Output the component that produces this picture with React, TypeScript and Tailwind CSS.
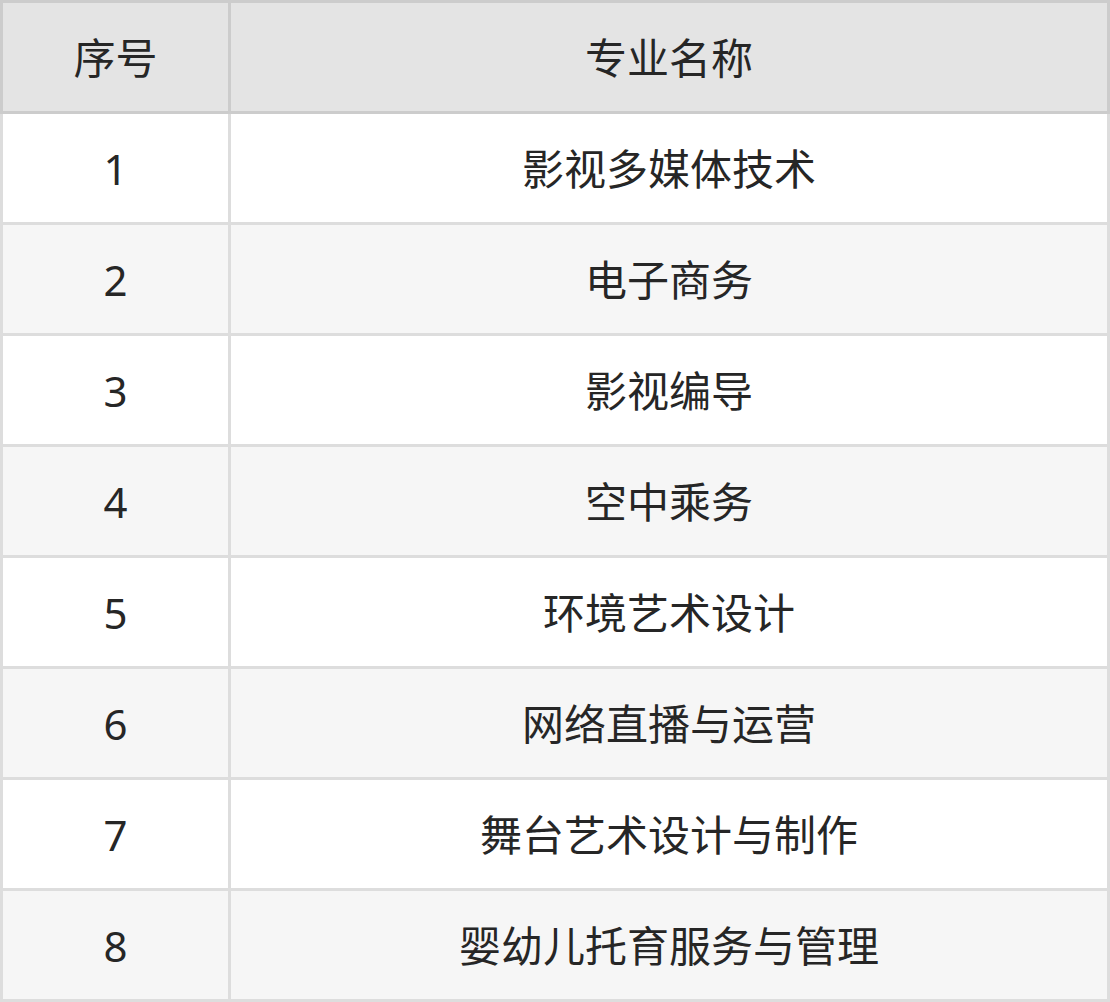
import React from "react";

const rows = [
  "影视多媒体技术",
  "电子商务",
  "影视编导",
  "空中乘务",
  "环境艺术设计",
  "网络直播与运营",
  "舞台艺术设计与制作",
  "婴幼儿托育服务与管理",
];

export default function App() {
  return (
    <div
      className="w-[1110px] flex flex-col text-[#262626] text-[42px]"
      style={{ fontFamily: '"Noto Sans", "Noto Sans CJK SC", sans-serif' }}
    >
      <div className="flex h-[114px] border-3 border-[#cccccc] bg-[#e4e4e4]">
        <div className="w-[228px] border-r-3 border-[#cccccc] flex items-center justify-center">序号</div>
        <div className="flex-1 flex items-center justify-center">专业名称</div>
      </div>
      {rows.map((name, i) => (
        <div
          key={i}
          className={`flex h-[111px] border-x-3 border-b-3 border-[#dddddd] ${i % 2 === 0 ? "bg-white" : "bg-[#f6f6f6]"}`}
        >
          <div className="w-[228px] border-r-3 border-[#dddddd] flex items-center justify-center">{i + 1}</div>
          <div className="flex-1 flex items-center justify-center">{name}</div>
        </div>
      ))}
    </div>
  );
}
